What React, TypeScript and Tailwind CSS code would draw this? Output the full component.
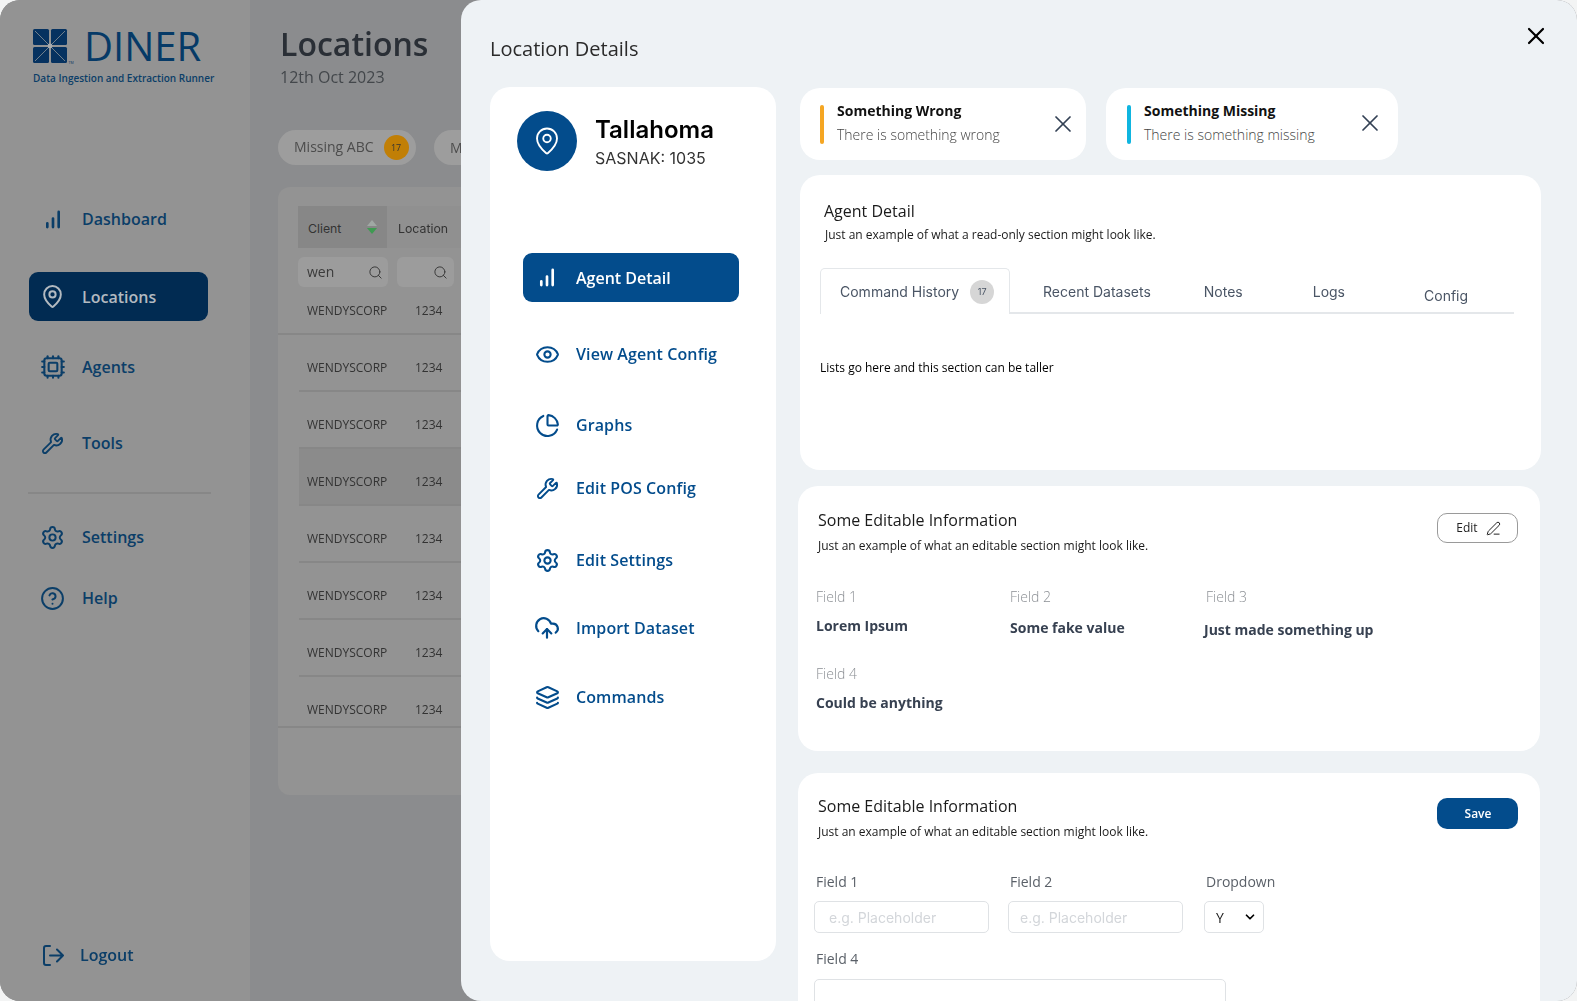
import { ChartPie, ChevronDown, CloudUpload, Cpu, Eye, Layers, CircleHelp, MapPin, PenLine, Search, Settings, Wrench, X } from 'lucide-react'

const openSans = { fontFamily: '"Open Sans", sans-serif' }

function Bars({ className }: { className?: string }) {
  return (
    <svg viewBox="0 0 16 20" className={className} fill="none" stroke="currentColor" strokeWidth="2.8" strokeLinecap="round">
      <path d="M2 18v-4M8 18V9M14 18V2" />
    </svg>
  )
}

function LogoMark() {
  return (
    <svg viewBox="0 0 42 35" className="h-[35px] w-[42px] shrink-0">
      <g fill="#063260">
        <rect x="0" y="0" width="16" height="16" rx="1.5" />
        <rect x="18" y="0" width="16" height="16" rx="1.5" />
        <rect x="0" y="18" width="16" height="16" rx="1.5" />
        <rect x="18" y="18" width="16" height="16" rx="1.5" />
      </g>
      <path d="M2 2l30 30M32 2L2 32" stroke="#8e9498" strokeWidth="0.8" />
      <circle cx="17" cy="17" r="2.4" fill="#a9adb0" />
      <text x="35.5" y="34.5" fontSize="3.6" fill="#063260">TM</text>
    </svg>
  )
}

function SideItem({ icon, label, className }: { icon: React.ReactNode; label: string; className?: string }) {
  return (
    <div className={`ml-[26px] flex h-[24px] items-center text-[#0b3e68] ${className ?? ''}`}>
      <div className="flex w-[53px] shrink-0 justify-center">{icon}</div>
      <span className="ml-[3px] text-[16px] font-semibold">{label}</span>
    </div>
  )
}

function TableRow({ highlight, height, pad, edge }: { highlight?: boolean; height: string; pad: string; edge?: boolean }) {
  return (
    <div className={`flex shrink-0 items-end border-b-2 border-[#878787] text-[12px] leading-[18px] text-[#333] ${height} ${pad} ${edge ? 'pl-[29px]' : 'ml-[21px] pl-[8px]'} ${highlight ? 'bg-[#8b8b8b]' : ''}`}>
      <span className="w-[108px]">WENDYSCORP</span>
      <span>1234</span>
    </div>
  )
}

function Background() {
  return (
    <div className="flex h-full w-full overflow-hidden rounded-[20px] bg-[#8b8c8e] blur-[0.4px]">
      <aside className="flex w-[250px] shrink-0 flex-col bg-[#939393] pt-[29px]">
        <div className="ml-[33px] flex items-start">
          <LogoMark />
          <span className="ml-[9px] mt-[-11px] text-[40px] font-medium leading-[56px] text-[#063a67]">DINER</span>
        </div>
        <div className="ml-[33px] mt-[-3px] text-[10px] font-semibold leading-[14px] text-[#0b3e68]">Data Ingestion and Extraction Runner</div>

        <SideItem className="mt-[122px]" icon={<Bars className="h-[19px] w-[16px]" />} label="Dashboard" />
        <div className="ml-[29px] mt-[41px] flex h-[49px] w-[179px] items-center rounded-[9px] bg-[#012b52] text-[#b3bac0]">
          <MapPin className="ml-[11px] h-[25px] w-[25px]" strokeWidth={1.9} />
          <span className="ml-[17px] text-[16px] font-semibold">Locations</span>
        </div>
        <SideItem className="mt-[34px]" icon={<Cpu className="h-[26px] w-[26px]" strokeWidth={1.9} />} label="Agents" />
        <SideItem className="mt-[52px]" icon={<Wrench className="h-[23px] w-[23px]" strokeWidth={1.9} />} label="Tools" />
        <div className="ml-[28px] mt-[37px] h-[2px] w-[183px] bg-[#878787]" />
        <SideItem className="mt-[31px]" icon={<Settings className="h-[25px] w-[25px]" strokeWidth={1.9} />} label="Settings" />
        <SideItem className="mt-[37px]" icon={<CircleHelp className="h-[25px] w-[25px]" strokeWidth={1.9} />} label="Help" />
        <div className="mb-[34px] ml-[43px] mt-auto flex h-[24px] items-center text-[#0b3e68]">
          <svg viewBox="0 0 21 21" className="h-[21px] w-[21px]" fill="none" stroke="currentColor" strokeWidth="2" strokeLinecap="round" strokeLinejoin="round">
            <path d="M7 1H3a2 2 0 0 0-2 2v15a2 2 0 0 0 2 2h4M7 10.5h13M14 4.5l6 6-6 6" />
          </svg>
          <span className="ml-[16px] text-[16px] font-semibold">Logout</span>
        </div>
      </aside>

      <main className="flex-1 pl-[28px] pt-[19px]">
        <h1 className="ml-[2px] text-[32px] font-semibold leading-[50px] text-[#2a2f36]">Locations</h1>
        <p className="ml-[2px] text-[16px] leading-[16px] text-[#43474b]">12th Oct 2023</p>

        <div className="mt-[45px] flex gap-[18px]">
          <div className="flex h-[35px] w-[138px] items-center rounded-full bg-[#9d9d9d] pl-[16px] text-[14px] text-[#4c4c4c]">
            <span className="mb-[2px]">Missing ABC</span>
            <span className="ml-[10px] flex h-[25px] w-[25px] items-center justify-center rounded-full bg-[#c17f06] text-[9px] text-[#333]">17</span>
          </div>
          <div className="flex h-[35px] w-[120px] items-center rounded-full bg-[#9d9d9d] pl-[16px] text-[14px] text-[#4c4c4c]">Missing</div>
        </div>

        <div className="mt-[22px] flex h-[608px] flex-col overflow-hidden rounded-l-[12px] bg-[#939393]">
          <div className="ml-[20px] mt-[19px] flex h-[42px] shrink-0 items-center text-[12.3px] text-[#333]" style={{ fontFamily: 'Inter, sans-serif' }}>
            <div className="flex h-full w-[89px] items-center bg-[#878787] pl-[10px]">
              <span className="mt-[4px]">Client</span>
              <svg viewBox="0 0 10 14" className="ml-[26px] h-[14px] w-[10px]">
                <path d="M5 0l5 6H0z" fill="#a0a8a4" />
                <path d="M5 14L0 8h10z" fill="#3f9a52" />
              </svg>
            </div>
            <div className="flex h-full flex-1 items-center bg-[#909090] pl-[11px]">
              <span className="mt-[4px]">Location</span>
            </div>
          </div>
          <div className="ml-[20px] mt-[9px] flex h-[30px] shrink-0 gap-[9px]">
            <div className="flex h-full w-[90px] items-center justify-between rounded-[6px] bg-[#9c9c9c] pl-[9px] pr-[5px] text-[14px] text-[#3a3a3a]">
              <span className="mb-[2px]">wen</span>
              <Search className="h-[15px] w-[15px]" strokeWidth={1.6} />
            </div>
            <div className="flex h-full w-[57px] items-center justify-end rounded-[6px] bg-[#9c9c9c] pr-[6px] text-[#3a3a3a]">
              <Search className="h-[15px] w-[15px]" strokeWidth={1.6} />
            </div>
          </div>
          <TableRow height="h-[48px]" pad="pb-[13px]" edge />
          <TableRow height="h-[57px]" pad="pb-[13px]" />
          <TableRow height="h-[57px]" pad="pb-[13px]" />
          <TableRow height="h-[57px]" pad="pb-[13px]" highlight />
          <TableRow height="h-[57px]" pad="pb-[13px]" />
          <TableRow height="h-[57px]" pad="pb-[13px]" />
          <TableRow height="h-[57px]" pad="pb-[13px]" />
          <TableRow height="h-[51px]" pad="pb-[7px]" edge />
        </div>
      </main>
    </div>
  )
}

function NavItem({ icon, label, className }: { icon: React.ReactNode; label: string; className?: string }) {
  return (
    <div className={`ml-[33px] flex h-[24px] items-center text-[#034c8c] ${className ?? ''}`}>
      <div className="flex w-[48px] shrink-0 justify-center">{icon}</div>
      <span className="ml-[5px] text-[16px] font-semibold tracking-[0.1px]">{label}</span>
    </div>
  )
}

function Banner({ title, text, bar, width, pad, closeGap }: { title: string; text: string; bar: string; width: string; pad: string; closeGap: string }) {
  return (
    <div className={`mt-[1px] flex h-[72px] items-center rounded-[20px] bg-white ${width} ${pad}`}>
      <div className={`h-[39px] w-[4px] rounded-[2px] ${bar}`} />
      <div className="ml-[13px] mt-[-3px] flex-1">
        <div className="text-[14px] font-bold leading-[22px] text-[#111]">{title}</div>
        <div className="mt-[2px] text-[14px] font-light leading-[22px] text-[#444]">{text}</div>
      </div>
      <X className={`h-[28px] w-[28px] text-[#334155] ${closeGap}`} strokeWidth={1.5} />
    </div>
  )
}

function Heading({ title, sub, gap }: { title: string; sub: string; gap: string }) {
  return (
    <div>
      <div className="text-[16px] leading-[24px] text-[#1a1a1a]">{title}</div>
      <div className={`text-[12px] leading-[18px] text-[#1a1a1a] ${gap}`}>{sub}</div>
    </div>
  )
}

function ReadField({ label, value, width, gap, labelGap }: { label: string; value: string; width: string; gap: string; labelGap?: string }) {
  return (
    <div className={width}>
      <div className={`text-[14px] font-light leading-[20px] text-[#8b8f94] ${labelGap ?? ''}`}>{label}</div>
      <div className={`text-[14px] font-bold leading-[20px] text-[#374151] ${gap}`}>{value}</div>
    </div>
  )
}

function TextBox({ placeholder, width, pad }: { placeholder: string; width: string; pad: string }) {
  return (
    <div className={`flex h-[32px] items-center rounded-[5px] border border-[#dfe2e5] text-[14px] text-[#d3d6da] ${width} ${pad}`} style={{ fontFamily: 'Inter, sans-serif' }}>
      {placeholder}
    </div>
  )
}

function DetailsPanel() {
  return (
    <div className="absolute bottom-0 left-[461px] right-0 top-0 overflow-hidden rounded-[20px] bg-[#eef2f5]">
      <div className="flex h-[87px] items-start justify-between">
        <h2 className="ml-[29px] mt-[34px] text-[20px] leading-[30px] text-[#2b2b2b]">Location Details</h2>
        <X className="mr-[27px] mt-[22px] h-[28px] w-[28px] text-black" strokeWidth={1.9} />
      </div>

      <div className="flex">
        <div className="ml-[29px] h-[874px] w-[286px] shrink-0 rounded-[20px] bg-white pt-[24px]">
          <div className="ml-[27px] flex">
            <div className="flex h-[60px] w-[60px] items-center justify-center rounded-full bg-[#034c8c] text-white">
              <MapPin className="h-[30px] w-[30px]" strokeWidth={1.5} />
            </div>
            <div className="ml-[18px]" style={{ fontFamily: 'Inter, sans-serif' }}>
              <div className="mt-[2px] text-[24px] font-semibold leading-[34px] text-black">Tallahoma</div>
              <div className="text-[16px] leading-[22px] text-[#333]">SASNAK: 1035</div>
            </div>
          </div>

          <div className="ml-[33px] mt-[82px] flex h-[49px] w-[216px] items-center rounded-[9px] bg-[#034c8c] text-white">
            <Bars className="ml-[16px] h-[19px] w-[16px]" />
            <span className="ml-[21px] text-[16px] font-semibold">Agent Detail</span>
          </div>
          <NavItem className="mt-[40px]" icon={<Eye className="h-[25px] w-[25px]" strokeWidth={2} />} label="View Agent Config" />
          <NavItem className="mt-[47px]" icon={<ChartPie className="h-[25px] w-[25px]" strokeWidth={2} />} label="Graphs" />
          <NavItem className="mt-[39px]" icon={<Wrench className="h-[23px] w-[23px]" strokeWidth={2} />} label="Edit POS Config" />
          <NavItem className="mt-[48px]" icon={<Settings className="h-[25px] w-[25px]" strokeWidth={2} />} label="Edit Settings" />
          <NavItem className="mt-[44px]" icon={<CloudUpload className="h-[26px] w-[26px]" strokeWidth={2} />} label="Import Dataset" />
          <NavItem className="mt-[45px]" icon={<Layers className="h-[25px] w-[25px]" strokeWidth={2} />} label="Commands" />
        </div>

        <div className="ml-[24px] flex-1">
          <div className="flex gap-[20px]">
            <Banner title="Something Wrong" text="There is something wrong" bar="bg-[#f5a623]" width="w-[286px]" pad="pl-[20px]" closeGap="mr-[9px]" />
            <Banner title="Something Missing" text="There is something missing" bar="bg-[#0fb5e0]" width="w-[292px]" pad="pl-[21px]" closeGap="mb-[2px] mr-[14px]" />
          </div>

          <div className="mt-[15px] h-[295px] w-[741px] rounded-[20px] bg-white pl-[24px] pt-[24px]">
            <Heading title="Agent Detail" sub="Just an example of what a read-only section might look like." gap="ml-[1px] mt-[3px]" />
            <div className="ml-[-4px] mt-[24px] flex h-[46px] w-[694px] items-start border-b-2 border-[#e4e7ea] text-[14px] text-[#4a5565]" style={{ fontFamily: 'Inter, sans-serif' }}>
              <div className="mb-[-2px] flex h-[46px] w-[190px] items-center rounded-t-[5px] border-x border-t border-[#e4e7ea] bg-white pl-[19px]">
                Command History
                <span className="ml-[11px] flex h-[24px] w-[24px] items-center justify-center rounded-full bg-[#d6d6d6] text-[9px]">17</span>
              </div>
              <span className="ml-[33px] mt-[14px] leading-[20px]">Recent Datasets</span>
              <span className="ml-[53px] mt-[14px] leading-[20px]">Notes</span>
              <span className="ml-[70px] mt-[14px] leading-[20px]">Logs</span>
              <span className="ml-[79px] mt-[18px] leading-[20px]">Config</span>
            </div>
            <p className="ml-[-4px] mt-[45px] text-[12px] leading-[18px] text-black">Lists go here and this section can be taller</p>
          </div>

          <div className="ml-[-2px] mt-[16px] h-[265px] w-[742px] rounded-[20px] bg-white pl-[20px] pt-[22px]">
            <div className="flex items-start justify-between pr-[22px]">
              <Heading title="Some Editable Information" sub="Just an example of what an editable section might look like." gap="mt-[5px]" />
              <div className="mt-[5px] flex h-[30px] w-[81px] items-center justify-center gap-[8px] rounded-[10px] border border-[#9a9a9a] pl-[2px] text-[12px] text-[#222]">
                Edit
                <PenLine className="h-[15px] w-[15px]" strokeWidth={1.6} />
              </div>
            </div>
            <div className="ml-[-2px] mt-[32px] flex items-start">
              <ReadField label="Field 1" value="Lorem Ipsum" width="w-[194px]" gap="mt-[9px]" />
              <ReadField label="Field 2" value="Some fake value" width="w-[194px]" gap="mt-[11px]" />
              <ReadField label="Field 3" value="Just made something up" width="w-[230px]" gap="mt-[13px]" labelGap="ml-[2px]" />
            </div>
            <div className="ml-[-2px] mt-[24px]">
              <ReadField label="Field 4" value="Could be anything" width="w-[194px]" gap="mt-[9px]" />
            </div>
          </div>

          <div className="ml-[-2px] mt-[22px] h-[400px] w-[742px] rounded-[20px] bg-white pl-[20px] pt-[21px]">
            <div className="flex items-start justify-between pr-[22px]">
              <Heading title="Some Editable Information" sub="Just an example of what an editable section might look like." gap="mt-[5px]" />
              <div className="mt-[4px] flex h-[31px] w-[81px] items-center justify-center rounded-[10px] bg-[#034c8c] pl-[1px] text-[12px] font-semibold text-white">Save</div>
            </div>
            <div className="ml-[-2px] mt-[31px] flex text-[14px] leading-[20px] text-[#5a6068]">
              <span className="w-[194px]">Field 1</span>
              <span className="w-[196px]">Field 2</span>
              <span>Dropdown</span>
            </div>
            <div className="ml-[-4px] mt-[9px] flex">
              <TextBox placeholder="e.g. Placeholder" width="w-[175px]" pad="pl-[14px]" />
              <TextBox placeholder="e.g. Placeholder" width="ml-[19px] w-[175px]" pad="pl-[11px]" />
              <div className="ml-[21px] flex h-[32px] w-[60px] items-center justify-between rounded-[5px] border border-[#dfe2e5] pl-[11px] pr-[6px] text-[14px] text-[#222]">
                Y
                <ChevronDown className="h-[14px] w-[14px] text-black" strokeWidth={3} />
              </div>
            </div>
            <div className="ml-[-2px] mt-[16px] text-[14px] leading-[20px] text-[#5a6068]">Field 4</div>
            <div className="ml-[-4px] mt-[10px] h-[60px] w-[412px] rounded-[5px] border border-[#dfe2e5]" />
          </div>
        </div>
      </div>
    </div>
  )
}

export default function App() {
  return (
    <div className="relative h-[1001px] w-[1577px] overflow-hidden bg-[#f3f4f4]" style={openSans}>
      <Background />
      <DetailsPanel />
    </div>
  )
}
